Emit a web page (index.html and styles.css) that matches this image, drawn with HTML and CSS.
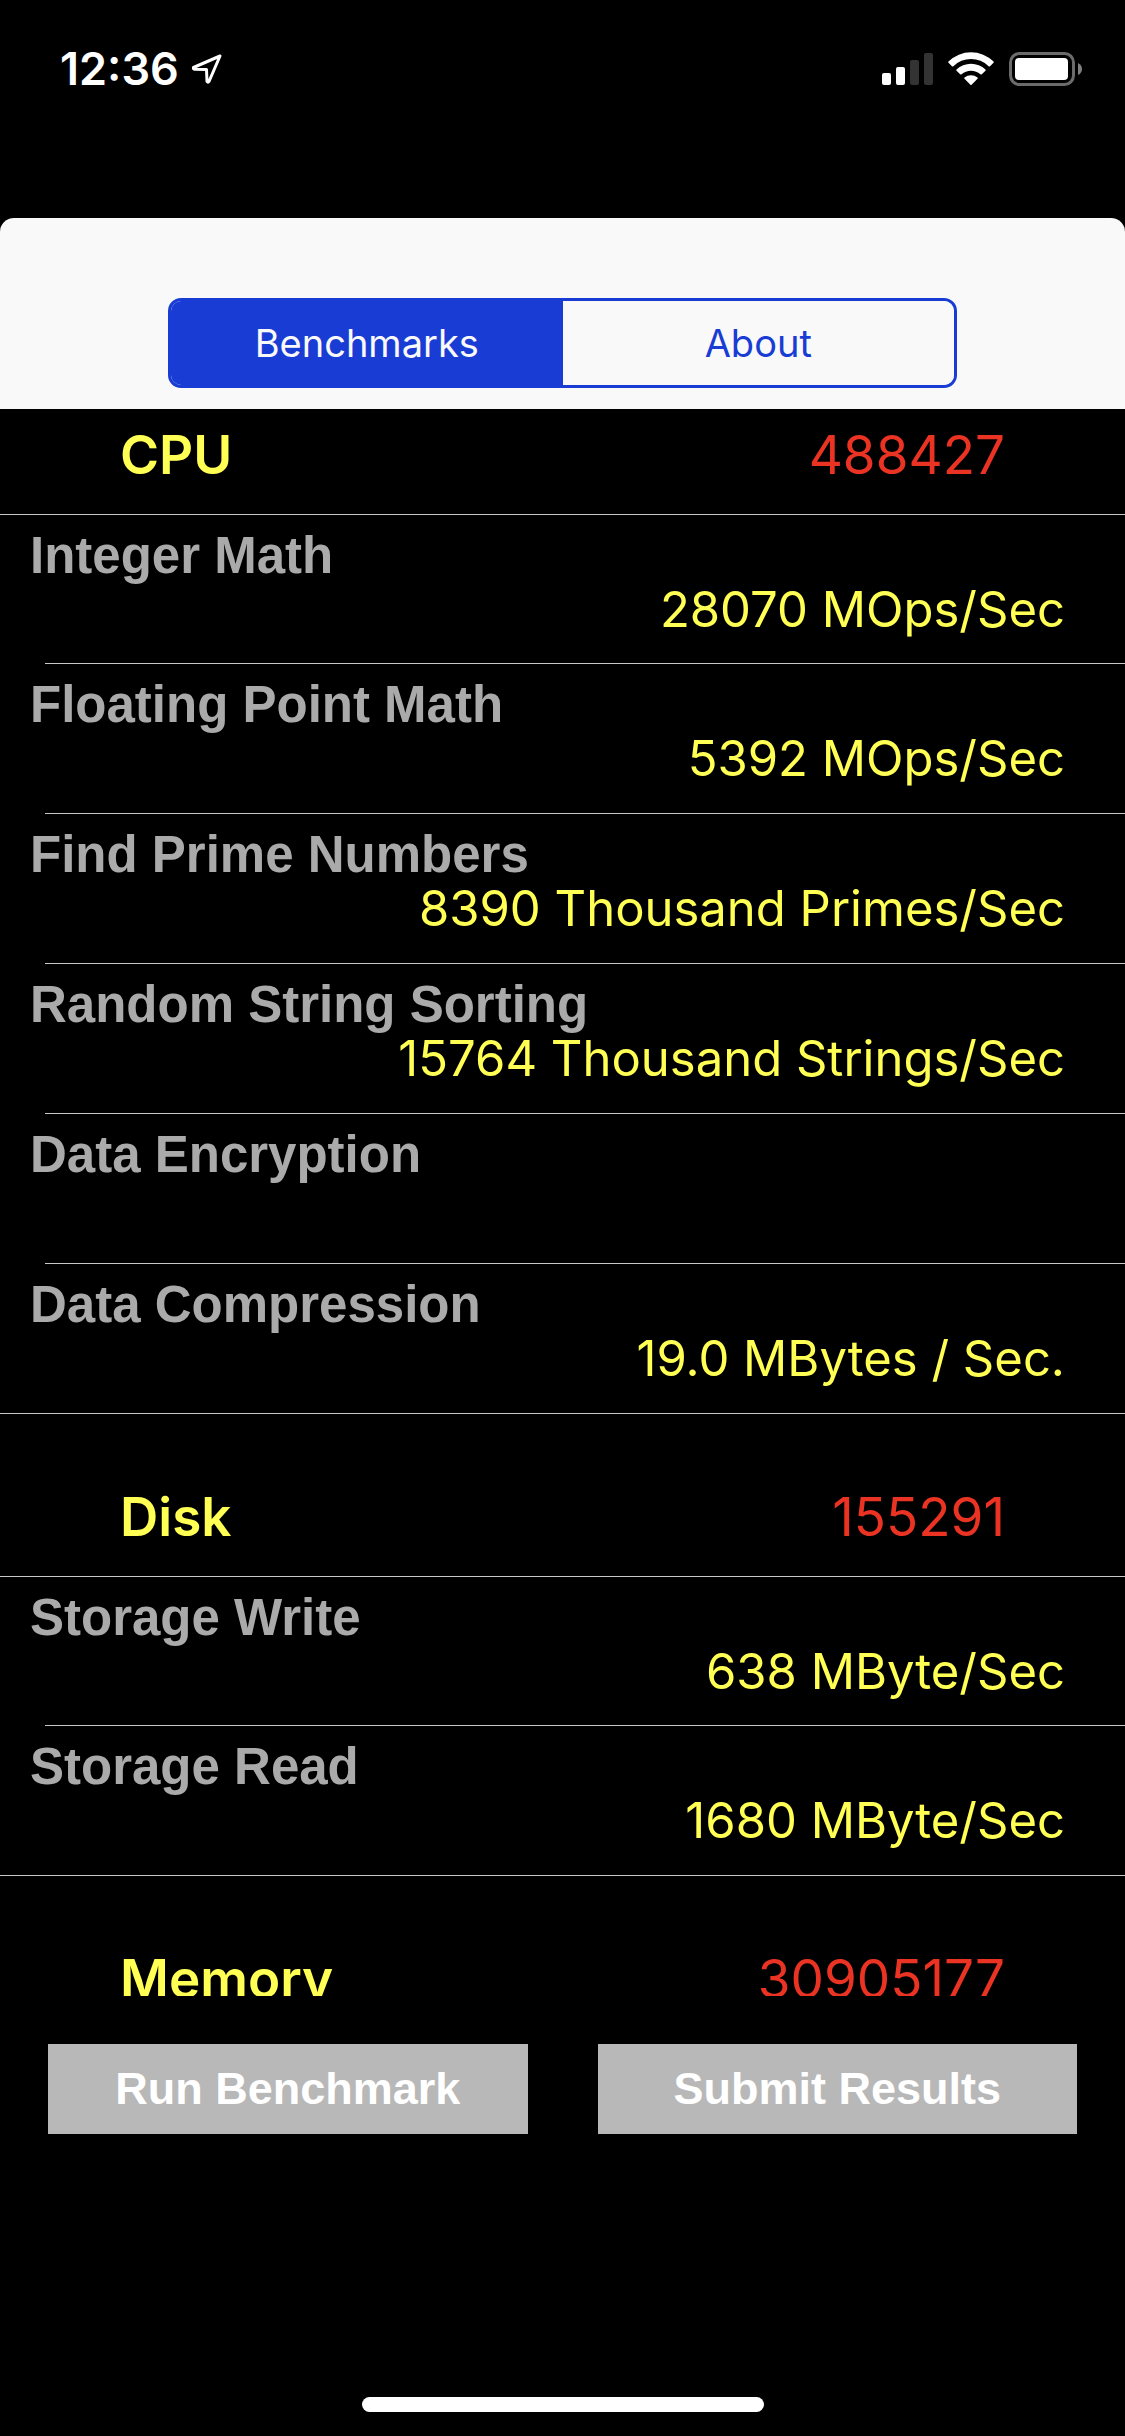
FILE: index.html
```html
<!DOCTYPE html>
<html lang="en">
<head>
  <meta charset="UTF-8" />
  <meta name="viewport" content="width=device-width, initial-scale=1.0" />
  <title>Benchmarks</title>
  <link rel="stylesheet" href="styles.css">
</head>
<body>
  <div class="status-bar">
    <span class="time">12:36</span>
    <svg class="location" width="32" height="32" viewBox="0 0 32 32" fill="none" stroke="#fff" stroke-width="3" stroke-linejoin="round">
      <path d="M29 3 L2.500 14.500 Q2 16 3.500 16.200 L15.500 16.500 L16 28.500 Q17 30 18 28.500 Z" />
    </svg>
    <div class="status-icons">
      <svg width="51" height="34" viewBox="0 0 51 34" fill="#fff">
        <rect x="0" y="21" width="9" height="12" rx="2" />
        <rect x="14" y="15" width="9" height="18" rx="2" />
        <rect x="28" y="8" width="9" height="25" rx="2" fill="#333" />
        <rect x="42" y="1" width="9" height="32" rx="2" fill="#333" />
      </svg>
      <svg width="46" height="34" viewBox="0 0 46 34" fill="#fff">
        <path d="M0.500 9.500 A32 32 0 0 1 45.500 9.500 Q46 10.200 45.500 10.700 L42 14.200 Q41.300 14.700 40.600 14.200 A25 25 0 0 0 5.400 14.200 Q4.700 14.700 4 14.200 L0.500 10.700 Q0 10.200 0.500 9.500 Z" />
        <path d="M8.500 17.500 A21 21 0 0 1 37.500 17.500 Q38 18.200 37.500 18.700 L33.800 22.300 Q33.100 22.800 32.400 22.300 A14 14 0 0 0 13.600 22.300 Q12.900 22.800 12.200 22.300 L8.500 18.700 Q8 18.200 8.500 17.500 Z" />
        <path d="M16.500 25.600 A10 10 0 0 1 29.500 25.600 Q30 26.200 29.500 26.800 L23.600 32.700 Q23 33.200 22.400 32.700 L16.500 26.800 Q16 26.200 16.500 25.600 Z" />
      </svg>
      <svg width="73" height="34" viewBox="0 0 73 34">
        <rect x="1.500" y="1.500" width="63" height="31" rx="9" fill="none" stroke="#6b6b6b" stroke-width="3" />
        <rect x="6" y="6" width="53" height="22" rx="4" fill="#fff" />
        <path d="M69 11 Q73 13 73 17 Q73 21 69 23 Z" fill="#808080" />
      </svg>
    </div>
  </div>

  <header class="header">
    <div class="tabs">
      <button class="tab active">Benchmarks</button>
      <button class="tab">About</button>
    </div>
  </header>

  <main class="results">
    <section>
      <div class="section-title pinned">
        <h2>CPU</h2>
        <span class="score">488427</span>
      </div>
      <ul>
        <li><h3>Integer Math</h3><p>28070 MOps/Sec</p></li>
        <li><h3>Floating Point Math</h3><p>5392 MOps/Sec</p></li>
        <li><h3>Find Prime Numbers</h3><p>8390 Thousand Primes/Sec</p></li>
        <li><h3>Random String Sorting</h3><p>15764 Thousand Strings/Sec</p></li>
        <li><h3>Data Encryption</h3><p></p></li>
        <li><h3>Data Compression</h3><p>19.0 MBytes / Sec.</p></li>
      </ul>
    </section>
    <section>
      <div class="section-title">
        <h2>Disk</h2>
        <span class="score">155291</span>
      </div>
      <ul>
        <li><h3>Storage Write</h3><p>638 MByte/Sec</p></li>
        <li><h3>Storage Read</h3><p>1680 MByte/Sec</p></li>
      </ul>
    </section>
    <section>
      <div class="section-title">
        <h2>Memory</h2>
        <span class="score">30905177</span>
      </div>
    </section>
  </main>

  <footer class="footer">
    <div class="buttons">
      <button>Run Benchmark</button>
      <button>Submit Results</button>
    </div>
    <div class="home-indicator"></div>
  </footer>
</body>
</html>
```

FILE: styles.css
```css
* { box-sizing: border-box; }
body {
  font-family: Inter, 'Liberation Sans', sans-serif;
  background: #000;
  margin: 0;
  height: 100vh;
  display: flex;
  flex-direction: column;
}
h2, h3, p, ul {
  margin: 0;
  padding: 0;
}
button {
  border: none;
  padding: 0;
  cursor: pointer;
}

/* Status bar */
.status-bar {
  flex: none;
  display: flex;
  align-items: flex-start;
  height: 218px;
  padding: 52px 43px 0 60px;
  color: #fff;
}
.time {
  font-size: 45px;
  font-weight: 600;
  line-height: 34px;
}
.location {
  margin: 1px 0 0 12px;
}
.status-icons {
  display: flex;
  gap: 15px;
  margin-left: auto;
}

/* Header with tabs */
.header {
  flex: none;
  padding: 80px 168px 21px;
  background: #f9f9f9;
  border-radius: 14px 14px 0 0;
}
.tabs {
  display: flex;
  height: 90px;
  border: 3px solid #193dd4;
  border-radius: 13px;
  overflow: hidden;
}
.tab {
  flex: 1;
  font-family: inherit;
  font-size: 38px;
  color: #193dd4;
  background: #f9f9f9;
}
.tab.active {
  color: #f9f9f9;
  background: #193dd4;
}

/* Results list */
.results {
  flex: 1;
  min-height: 0;
  overflow: hidden;
}
.section-title {
  display: flex;
  justify-content: space-between;
  align-items: flex-end;
  height: 162px;
  padding: 0 120px 27px;
  font-size: 53px;
  line-height: 64px;
}
.section-title.pinned {
  height: 105px;
}
h2 {
  font-size: 53px;
  font-weight: 600;
  color: #ffff54;
}
.score {
  color: #ea3323;
}
ul {
  list-style: none;
}
li {
  height: 150px;
  padding: 11px 60px 0 30px;
  background: linear-gradient(#c8c7cc, #c8c7cc) 45px 100% / 100% 1px no-repeat;
}
li:first-child {
  border-top: 1px solid #c8c7cc;
}
li:last-child {
  background-position: 0 100%;
}
h3 {
  font-family: 'Liberation Sans', sans-serif;
  font-size: 51px;
  font-weight: bold;
  line-height: 60px;
  color: #aaa;
}
p {
  font-size: 49px;
  line-height: 48px;
  color: #ffff54;
  text-align: right;
}

/* Bottom buttons */
.footer {
  flex: none;
  display: flex;
  flex-direction: column;
  justify-content: space-between;
  align-items: center;
  height: 440px;
  padding: 48px 48px 24px;
}
.buttons {
  display: flex;
  gap: 70px;
  width: 100%;
}
.buttons button {
  flex: 1;
  height: 90px;
  font-family: 'Liberation Sans', sans-serif;
  font-size: 45px;
  font-weight: bold;
  color: #fff;
  background: #b8b8b8;
}
.home-indicator {
  width: 402px;
  height: 15px;
  border-radius: 8px;
  background: #fff;
}
```
